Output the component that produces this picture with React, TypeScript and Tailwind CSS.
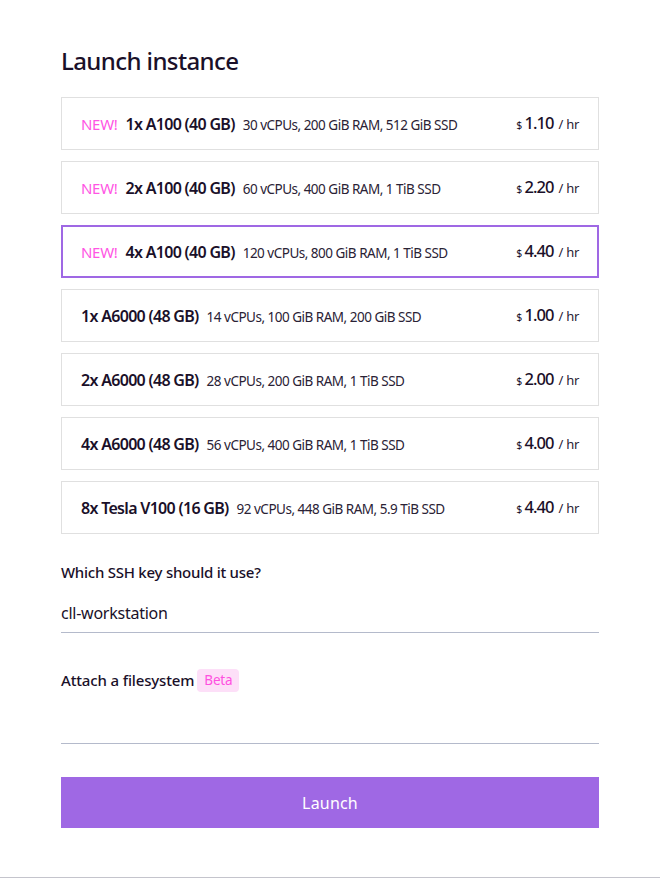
import React from "react";

const rows = [
  { isNew: true, name: "1x A100 (40 GB)", spec: "30 vCPUs, 200 GiB RAM, 512 GiB SSD", price: "1.10" },
  { isNew: true, name: "2x A100 (40 GB)", spec: "60 vCPUs, 400 GiB RAM, 1 TiB SSD", price: "2.20" },
  { isNew: true, name: "4x A100 (40 GB)", spec: "120 vCPUs, 800 GiB RAM, 1 TiB SSD", price: "4.40", selected: true },
  { isNew: false, name: "1x A6000 (48 GB)", spec: "14 vCPUs, 100 GiB RAM, 200 GiB SSD", price: "1.00" },
  { isNew: false, name: "2x A6000 (48 GB)", spec: "28 vCPUs, 200 GiB RAM, 1 TiB SSD", price: "2.00" },
  { isNew: false, name: "4x A6000 (48 GB)", spec: "56 vCPUs, 400 GiB RAM, 1 TiB SSD", price: "4.00" },
  { isNew: false, name: "8x Tesla V100 (16 GB)", spec: "92 vCPUs, 448 GiB RAM, 5.9 TiB SSD", price: "4.40" },
];

export default function App() {
  return (
    <div
      className="w-[660px] h-[878px] bg-white text-[#1a1029] border-b border-[#c4c4cc] box-border"
      style={{ fontFamily: '"Noto Sans", "Open Sans", sans-serif' }}
    >
      <div className="px-[61px] pt-[42px] flex flex-col">
        <h1 className="text-[24px] font-medium leading-[38px] tracking-[-0.6px]">Launch instance</h1>
        <div className="mt-[17px] flex flex-col gap-[11px]">
          {rows.map((r) => (
            <div
              key={r.name}
              className={
                r.selected
                  ? "h-[53px] border-2 border-[#9f68e4] flex items-center justify-between pl-[18px] pr-[18px]"
                  : "h-[53px] border border-[#e0e0e0] flex items-center justify-between pl-[19px] pr-[19px]"
              }
            >
              <div className="flex items-baseline whitespace-nowrap">
                {r.isNew && <span className="text-[15px] text-[#ff55e4] mr-[8px] tracking-[-0.3px]">NEW!</span>}
                <span className="text-[16px] font-semibold mr-[8px] tracking-[-0.7px]">{r.name}</span>
                <span className="text-[13.5px] text-[#2a2235] tracking-[-0.5px]">{r.spec}</span>
              </div>
              <div className="flex items-baseline whitespace-nowrap">
                <span className="text-[10.5px] mr-[2px]">$</span>
                <span className="text-[16.5px] font-medium tracking-[-0.9px]">{r.price}</span>
                <span className="text-[13px] ml-[5px] text-[#2a2235] tracking-[-0.3px]">/ hr</span>
              </div>
            </div>
          ))}
        </div>
        <div className="mt-[27px] text-[15px] font-medium leading-[22px] tracking-[-0.25px]">Which SSH key should it use?</div>
        <div className="mt-[19px] text-[16px] leading-[22px] pb-[8px] border-b border-[#b4bacb] tracking-[-0.25px]">cll-workstation</div>
        <div className="mt-[36px] flex items-center gap-[3px]">
          <span className="text-[15px] font-medium tracking-[-0.15px]">Attach a filesystem</span>
          <span className="text-[13.5px] text-[#ff4fe0] bg-[#fddff8] rounded-[4px] px-[7px] h-[23px] flex items-center tracking-[-0.2px]">Beta</span>
        </div>
        <div className="mt-[51px] border-b border-[#b4bacb]"></div>
        <button className="mt-[33px] h-[51px] w-full bg-[#9f68e4] text-white text-[16px] tracking-[0.2px]">Launch</button>
      </div>
    </div>
  );
}
